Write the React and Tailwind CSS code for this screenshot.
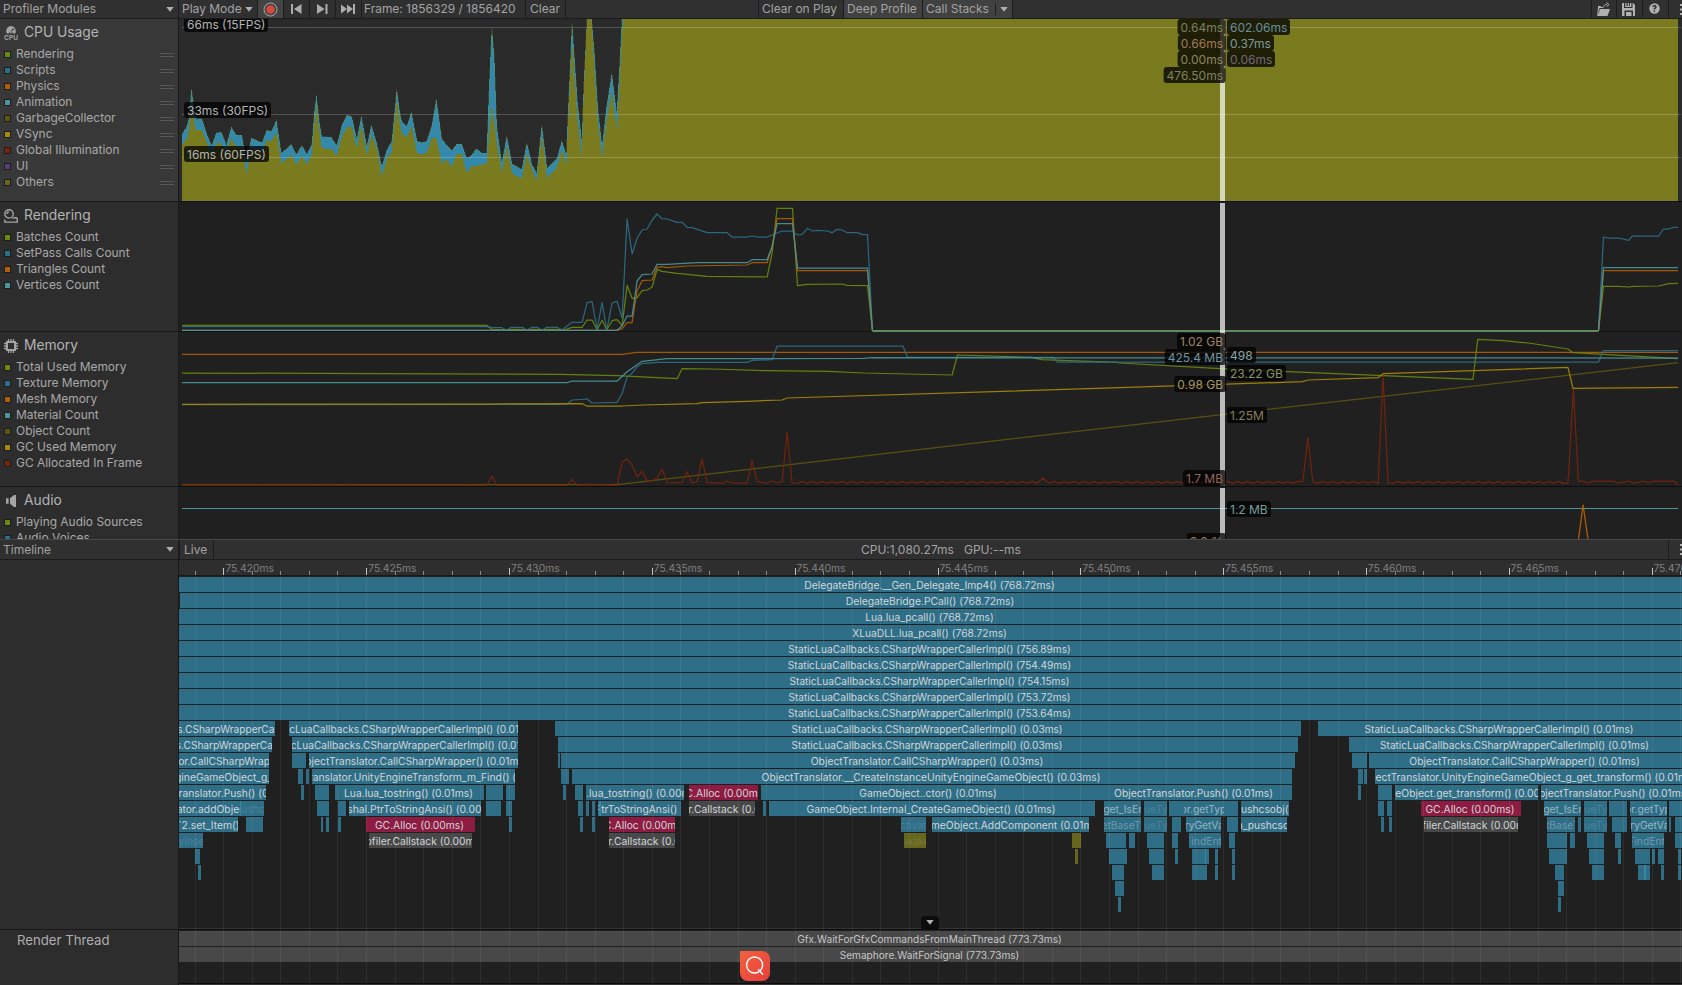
import React from "react";

const C = {
  green: "#6b8a0c",
  blue: "#2c6f8a",
  orange: "#b15e05",
  cyan: "#4a969c",
  darkOlive: "#5d560f",
  yellow: "#a88a08",
  red: "#78240d",
  purple: "#54407a",
  olive: "#68681c",
};

/* ---------- chart geometry ---------- */
// Samples are stored in plot units; each block of samples has its own left edge.
const block = (left, scale, pts) => pts.map(([x, y]) => [left + x / scale, y / 3]);
const A = (pts) => block(0, 2.8, pts);
const B = (pts) => block(560, 2.8, pts);
const D = (pts) => block(1120, 2.79, pts);
const join = (pts) => pts.map(([x, y]) => x.toFixed(1) + "," + y.toFixed(1)).join(" ");

const cpuA = [
  [510, 403, 435], [524, 378, 415], [530, 350, 385], [536, 268, 318], [548, 356, 390], [565, 356, 390], [580, 405, 430],
  [593, 438, 470], [606, 398, 430], [620, 397, 430], [634, 435, 460], [648, 382, 415], [662, 405, 440],
  [677, 405, 440], [690, 485, 520], [704, 414, 445], [730, 427, 455], [735, 425, 455], [747, 390, 421], [760, 395, 423],
  [774, 361, 397], [788, 460, 490], [816, 433, 465], [830, 464, 493], [845, 436, 468], [859, 463, 492],
  [873, 434, 463], [880, 340, 380], [886, 286, 316], [895, 370, 400], [901, 410, 445], [928, 412, 447], [943, 437, 466],
  [958, 375, 408], [972, 345, 381], [985, 350, 381], [999, 418, 445], [1012, 349, 378], [1027, 440, 466],
  [1040, 376, 405], [1055, 430, 445], [1069, 500, 530], [1083, 450, 475], [1097, 424, 455], [1111, 268, 298],
  [1120, 340, 375], [1125, 365, 400], [1139, 380, 412], [1152, 337, 378], [1168, 424, 460], [1181, 428, 463], [1195, 424, 458],
  [1209, 378, 414], [1222, 298, 414], [1237, 418, 490], [1251, 435, 478], [1265, 452, 500], [1278, 433, 463],
  [1293, 433, 463], [1307, 475, 520], [1321, 465, 497], [1334, 446, 497], [1349, 460, 495], [1363, 460, 490], [1370, 250, 400], [1377, 85, 316],
  [1384, 170, 370], [1391, 380, 432], [1405, 490, 517], [1419, 408, 438], [1434, 492, 520], [1461, 508, 535], [1475, 430, 460],
  [1490, 495, 510], [1503, 520, 543], [1517, 375, 405], [1532, 505, 535], [1560, 475, 500],
];
const cpuB = [
  [5, 423, 450], [18, 466, 493], [22, 350, 390], [34, 70, 125], [49, 305, 360], [61, 424, 468], [67, 250, 280],
  [76, 50, 50], [88, 50, 60], [97, 165, 220], [106, 325, 370], [118, 438, 472], [130, 325, 365],
  [145, 220, 275], [159, 340, 390], [167, 195, 255], [174, 50, 100], [178, 50, 50],
];
const cpuTop = [...A(cpuA), ...B(cpuB)];
const cpuBase = [...A(cpuA.map(([x, , y]) => [x, y])), ...B(cpuB.map(([x, , y]) => [x, y]))];
const area = (pts) => join([[182, 201], ...pts, [1678, 16], [1678, 201]]);

const rendering = {
  green: [
    ...A([[510, 376], [1363, 376], [1377, 388], [1405, 389], [1419, 391], [1432, 388], [1463, 388], [1475, 391], [1490, 388], [1505, 388], [1517, 391], [1531, 388], [1560, 388]]),
    ...B([[10, 390], [34, 382], [62, 382], [76, 360], [90, 360], [104, 390], [118, 361], [131, 390], [146, 362], [160, 359], [174, 377], [188, 256], [202, 295], [216, 293], [230, 272], [244, 270], [258, 261], [272, 208], [286, 214], [328, 220], [412, 229], [580, 231], [594, 160], [608, 25], [651, 25], [665, 257], [693, 253], [790, 252], [804, 256], [861, 257], [875, 392]]),
    ...D([[1335, 392], [1349, 259], [1391, 259], [1419, 261], [1430, 259], [1503, 258], [1530, 251], [1557, 250]]),
  ],
  blue: [
    ...A([[510, 380], [1363, 380], [1377, 383], [1405, 383], [1419, 391], [1432, 382], [1463, 382], [1475, 391], [1490, 382], [1505, 382], [1517, 391], [1531, 382], [1560, 382]]),
    ...B([[5, 390], [34, 367], [62, 367], [76, 308], [90, 305], [104, 388], [118, 308], [131, 390], [146, 309], [160, 304], [174, 355], [188, 57], [202, 162], [216, 115], [230, 90], [244, 87], [258, 60], [272, 42], [286, 56], [300, 57], [328, 67], [342, 67], [356, 82], [370, 83], [412, 98], [468, 98], [482, 111], [524, 111], [538, 108], [552, 111], [580, 111], [608, 99], [622, 93], [650, 93], [665, 105], [678, 103], [693, 85], [707, 93], [720, 91], [748, 93], [762, 98], [776, 88], [790, 90], [804, 98], [832, 98], [846, 103], [861, 104], [875, 392]]),
    ...D([[1335, 392], [1349, 111], [1363, 114], [1391, 114], [1419, 121], [1430, 108], [1503, 108], [1516, 87], [1530, 87], [1544, 82], [1557, 82]]),
  ],
  orange: [
    ...A([[510, 391]]),
    ...B([[160, 391], [174, 386], [188, 368], [202, 368], [216, 272], [230, 242], [258, 240], [272, 202], [286, 200], [300, 203], [356, 198], [524, 195], [538, 188], [580, 188], [594, 140], [608, 56], [651, 56], [665, 212], [861, 212], [875, 392]]),
    ...D([[1335, 392], [1349, 212], [1557, 212]]),
  ],
  cyan: [
    ...A([[510, 391]]),
    ...B([[160, 391], [174, 377], [188, 348], [202, 348], [216, 243], [230, 224], [258, 222], [272, 193], [300, 193], [384, 188], [524, 188], [538, 179], [580, 179], [594, 140], [608, 71], [651, 71], [665, 204], [861, 204], [875, 392]]),
    ...D([[1335, 392], [1349, 203], [1557, 203]]),
  ],
};

const ripple = (from, to) => {
  const pts = [];
  for (let x = from, i = 0; x <= to; x += 14, i++) pts.push([x, i % 2 ? 844 : 850]);
  return pts;
};
const memory = {
  orange: [...A([[510, 463]]), ...B([[174, 463], [216, 457]]), ...D([[1557, 457]])],
  green: [
    ...A([[510, 519], [1568, 523]]),
    ...B([[160, 527], [328, 536], [342, 506], [426, 507], [580, 512], [750, 514], [850, 519], [1098, 525], [1113, 465], [1320, 472], [1350, 479], [1560, 487]]),
    ...D([[0, 489], [280, 506], [985, 538], [998, 418], [1070, 422], [1140, 429], [1250, 447], [1264, 458], [1557, 476]]),
  ],
  blue: [
    ...A([[510, 614], [1560, 613]]),
    ...B([[20, 612], [34, 600], [76, 597], [90, 609], [160, 607], [174, 580], [188, 532], [202, 520], [216, 500], [230, 491], [272, 487], [524, 487], [538, 481], [594, 479], [608, 438], [960, 438], [973, 472], [1380, 472], [1393, 486], [1568, 486]]),
    ...D([[1335, 486], [1349, 452], [1557, 452]]),
  ],
  cyan: [
    ...A([[510, 548]]),
    ...B([[20, 548], [34, 543], [160, 543], [188, 515], [230, 484], [300, 476], [850, 475], [875, 473]]),
    ...D([[1557, 474]]),
  ],
  darkOlive: [...A([[510, 854]]), ...B([[160, 854], [1568, 679]]), ...D([[1557, 488]])],
  yellow: [
    ...A([[510, 613], [1363, 612]]),
    ...B([[62, 611], [76, 618], [174, 618], [230, 615], [384, 611], [398, 608], [524, 604], [622, 600], [636, 594], [1568, 563]]),
    ...D([[510, 545], [524, 540], [720, 533], [734, 521], [1250, 502], [1264, 565], [1557, 562]]),
  ],
  red: [
    ...A([[510, 855], [1363, 856], [1377, 828], [1391, 856]]),
    ...B([[20, 856], [34, 838], [48, 856], [76, 853], [160, 856], [174, 785], [188, 777], [202, 795], [216, 831], [230, 814], [244, 842], [258, 842], [272, 833], [286, 808], [300, 849], [342, 847], [356, 816], [370, 849], [384, 845], [398, 777], [412, 847], [455, 850], [468, 843], [482, 849], [524, 849], [538, 783], [552, 845], [580, 850], [594, 842], [608, 849], [622, 845], [636, 697], [650, 849]]),
    ...B(ripple(664, 1336)),
    ...B([[1352, 835]]),
    ...B(ripple(1370, 1560)),
    ...D(ripple(6, 500)),
    ...D([[510, 845], [524, 713], [538, 845]]),
    ...D(ripple(552, 710)),
    ...D([[720, 850], [734, 527], [748, 849]]),
    ...D(ripple(762, 1244)),
    ...D([[1250, 850], [1265, 568], [1279, 843], [1293, 843], [1306, 850], [1320, 843], [1376, 843], [1390, 850], [1418, 843], [1432, 850], [1460, 843], [1474, 850], [1488, 843], [1545, 843], [1557, 856]]),
  ],
};

/* ---------- timeline ---------- */
const SL = "StaticLuaCallbacks.CSharpWrapperCallerImpl()";
const OT = "ObjectTranslator.";
const GC = "GC.Alloc (0.00ms)";
const CS = "Profiler.Callstack (0.00ms)";
const IsEnum = "Type.get_IsEnum()";
const IsValue = "IsValueType()";
const TryGet = "Dictionary.TryGetValue() (0.00)";
// [left, right, label, kind, label tone]
const rows = [
  [[179, 1682, "DelegateBridge.__Gen_Delegate_Imp4() (768.72ms)"]],
  [[180, 1682, "DelegateBridge.PCall() (768.72ms)"]],
  [[179, 1682, "Lua.lua_pcall() (768.72ms)"]],
  [[179, 1682, "XLuaDLL.lua_pcall() (768.72ms)"]],
  [[179, 1682, SL + " (756.89ms)"]],
  [[179, 1682, SL + " (754.49ms)"]],
  [[179, 1682, SL + " (754.15ms)"]],
  [[179, 1682, SL + " (753.72ms)"]],
  [[179, 1682, SL + " (753.64ms)"]],
  [[179, 275, SL + " (0.01ms)"], [289, 518, SL + " (0.01ms)"], [555, 1301, SL + " (0.03ms)"], [1318, 1682, SL + " (0.01ms)"]],
  [[179, 272, SL + " (0.01ms)"], [292, 518, SL + " (0.01ms)"], [558, 1298, SL + " (0.03ms)"], [1349, 1682, SL + " (0.01ms)"]],
  [[179, 269, OT + "CallCSharpWrapper() (0.01ms)"], [292, 306], [309, 518, OT + "CallCSharpWrapper() (0.01ms)"], [558, 560], [561, 1295, OT + "CallCSharpWrapper() (0.03ms)"], [1352, 1367], [1369, 1682, OT + "CallCSharpWrapper() (0.01ms)"]],
  [[179, 269, OT + "UnityEngineGameObject_g_get_transform() (0.01ms)"], [298, 303], [306, 309], [312, 515, OT + "UnityEngineTransform_m_Find() (0.01ms)"], [561, 569], [572, 1292, OT + "__CreateInstanceUnityEngineGameObject() (0.03ms)"], [1358, 1363], [1364, 1367], [1375, 1682, OT + "UnityEngineGameObject_g_get_transform() (0.01ms)"]],
  [[179, 266, OT + "Push() (0.00ms)"], [301, 304], [315, 329], [335, 484, "Lua.lua_tostring() (0.01ms)"], [486, 503], [506, 515], [563, 566], [575, 583], [586, 684, "Lua.lua_tostring() (0.00ms)"], [689, 758, GC, "gc"], [761, 1097, "GameObject..ctor() (0.01ms)"], [1097, 1292, OT + "Push() (0.01ms)"], [1358, 1361], [1378, 1392], [1395, 1538, "GameObject.get_transform() (0.00ms)"], [1541, 1682, OT + "Push() (0.01ms)"]],
  [[179, 241, OT + "addObject() (0.00ms)"], [241, 264, "xlua_pushcsobj()", "", "faint"], [317, 329], [338, 346], [349, 481, "Marshal.PtrToStringAnsi() (0.00ms)"], [486, 501], [506, 512], [578, 583], [586, 589], [592, 595], [598, 681, "Marshal.PtrToStringAnsi() (0.00ms)"], [689, 755, CS, "gray"], [763, 766], [769, 1095, "GameObject.Internal_CreateGameObject() (0.01ms)"], [1104, 1141, IsEnum, "", "soft"], [1144, 1167, IsValue, "", "faint"], [1169, 1184], [1184, 1224, OT + "getTypeId() (0.00ms)", "", "soft"], [1224, 1238], [1241, 1289, "Lua.xlua_pushcsobj() (0.00ms)"], [1378, 1384], [1387, 1392], [1421, 1521, GC, "gc"], [1544, 1581, IsEnum, "", "soft"], [1584, 1607, IsValue, "", "faint"], [1609, 1627], [1630, 1667, OT + "getTypeId() (0.00ms)", "", "soft"], [1669, 1682]],
  [[179, 238, "Dictionary`2.set_Item() (0.00ms)"], [246, 263], [321, 323], [326, 329], [338, 341], [366, 475, GC, "gc"], [509, 512], [580, 583], [592, 595], [609, 675, GC, "gc"], [901, 926, "Activate", "", "faint"], [932, 1089, "GameObject.AddComponent (0.01ms)"], [1104, 1141, "Type.GetBaseType() ()", "", "dim"], [1144, 1167, IsValue, "", "faint"], [1172, 1181], [1186, 1221, TryGet, "", "soft"], [1227, 1238], [1241, 1287, "Lua.xlua_pushcsobj (0.0)"], [1381, 1384], [1389, 1392], [1424, 1518, CS, "gray"], [1547, 1575, "Type.GetBaseType() ()", "", "dim"], [1578, 1581], [1584, 1607, IsValue, "", "faint"], [1612, 1627], [1631, 1667, TryGet, "", "soft"], [1669, 1671], [1675, 1682]],
  [[179, 203, "TryInsert", "", "faint"], [369, 472, CS, "gray"], [609, 675, CS, "gray"], [904, 926, "Awake", "olive", "faint"], [1072, 1081, "", "olive"], [1106, 1126], [1129, 1135], [1147, 1164], [1172, 1178], [1189, 1221, "e.FindEntry", "", "dim"], [1229, 1235], [1547, 1567], [1570, 1575], [1587, 1604], [1615, 1621], [1632, 1664, "e.FindEntry", "", "dim"], [1675, 1682]],
  [[195, 200], [1075, 1078, "", "olive"], [1109, 1127], [1149, 1164], [1175, 1178], [1192, 1209], [1215, 1218], [1232, 1235], [1549, 1567], [1589, 1604], [1618, 1621], [1635, 1650], [1652, 1655], [1658, 1664], [1678, 1681]],
  [[198, 201], [1112, 1124], [1152, 1164], [1192, 1207], [1215, 1218], [1232, 1235], [1555, 1564], [1592, 1604], [1638, 1650], [1661, 1664], [1678, 1681]],
  [[1115, 1124], [1558, 1564]],
  [[1118, 1121], [1558, 1561]],
];
const kinds = { gc: "bg-[#8e1b42]", gray: "bg-[#484848]", olive: "bg-[#66661d]" };
const tones = { faint: "text-white/15", dim: "text-white/30", soft: "text-white/50" };

const ticks = Array.from({ length: 53 }, (_, i) => ({ x: Math.floor(195.1 + i * 28.575 - 179), major: i % 5 === 1 }));
const tickLabels = ["75.420ms", "75.425ms", "75.430ms", "75.435ms", "75.440ms", "75.445ms", "75.450ms", "75.455ms", "75.460ms", "75.465ms", "75.470ms"];

/* ---------- small pieces ---------- */
const Caret = ({ className = "" }) => (
  <svg className={"shrink-0 " + className} width="8" height="5" viewBox="0 0 8 5"><path d="M.3 0h7.4L4 4.8z" fill="#b0b0b0" /></svg>
);

const Cell = ({ className = "", children }) => (
  <div className={"flex h-full shrink-0 items-center border-r border-[#1c1c1c] " + className}>{children}</div>
);

const icons = {
  cpu: (
    <svg width="14" height="14" viewBox="0 0 14 14">
      <path d="M2.9 7.6A5 5 0 0 1 7 .1a5 5 0 0 1 4.1 7.5z" fill="#a4a4a4" />
      <path d="m10 2.4-3 3.2" stroke="#383838" strokeWidth="1.1" />
      <path d="M4.9 7.8a2.1 2.1 0 0 1 4.2 0z" fill="#383838" />
      <circle cx="7" cy="6.2" r=".9" fill="#a4a4a4" />
      <text x="0" y="14" fill="#a4a4a4" fontSize="6.6" fontWeight="700" fontFamily="Inter" textLength="14" lengthAdjust="spacingAndGlyphs">CPU</text>
    </svg>
  ),
  rendering: (
    <svg width="14" height="14" viewBox="0 0 14 14" fill="none" stroke="#a4a4a4">
      <circle cx="5" cy="4.9" r="4.2" strokeWidth="1.4" />
      <path d="M3.6 5.4a1.9 1.9 0 0 1 1.9-1.9" strokeWidth="1.4" transform="translate(-.6 -.5)" />
      <path d="M10 8.7h2.6l.7 1.5v2.9H.8v-2.6" strokeWidth="1.4" />
      <path d="M8.2 9.6 10 8.7" strokeWidth="1.2" />
    </svg>
  ),
  memory: (
    <svg width="14" height="14" viewBox="0 0 14 14" fill="none" stroke="#a4a4a4">
      <rect x="3" y="3" width="8" height="8" strokeWidth="2" />
      <path d="M4.5 0v2M7 0v2M9.5 0v2M4.5 12v2M7 12v2M9.5 12v2M0 4.5h2M0 7h2M0 9.5h2M12 4.5h2M12 7h2M12 9.5h2" strokeWidth="1.3" />
    </svg>
  ),
  audio: (
    <svg width="14" height="14" viewBox="0 0 14 14" fill="#a4a4a4"><path d="M2 4.2h2.6v5.6H2zM6 4.2 10 1h2v12h-2L6 9.8z" /></svg>
  ),
};

const Panel = ({ title, icon, items, height, selected, handles }) => (
  <div className={"shrink-0 overflow-hidden border-b border-[#191919] " + height + (selected ? " bg-[#383838]" : " bg-[#2d2d2d]")}>
    <div className="flex h-[27px] items-center gap-[6px] pl-1">
      {icon}
      <span className="text-[13.8px] leading-none text-[#b4b4b4]">{title}</span>
    </div>
    {items.map(([label, color]) => (
      <div key={label} className="flex h-4 items-center pr-1 pl-1">
        <span className="size-[7px] shrink-0 border border-[#1d1d1d]" style={{ background: color }} />
        <span className="ml-[5px] flex-1 text-[11.95px] leading-4 whitespace-nowrap text-[#a8a8a8]">{label}</span>
        {handles && <span className="mt-px h-1 w-[14px] border-y border-[#585858]" />}
      </div>
    ))}
  </div>
);

// A value box that lies over a chart; x is its left edge, or its right edge when `end` is set.
const Chip = ({ x, y, end, color = "#b4b4b4", children }) => (
  <span
    className="absolute h-4 rounded-[3px] bg-black/75 px-[3px] text-[12px] leading-[17px] whitespace-nowrap"
    style={{ left: x - 179, top: y, color, transform: end ? "translateX(-100%)" : undefined }}
  >
    {children}
  </span>
);

const Marker = ({ top = "top-0" }) => <span className={"absolute bottom-0 left-[1041px] w-[5px] bg-white/70 " + top} />;

const Lines = ({ series, dy, height, children }) => (
  <svg className="block" width="1502" height={height} fill="none">
    <g transform={"translate(-179 " + dy + ")"} strokeWidth="1.25" strokeLinejoin="round">
      {Object.entries(series).map(([name, pts]) => (
        <polyline key={name} points={join(pts)} stroke={C[name]} strokeOpacity=".9" />
      ))}
      {children}
    </g>
  </svg>
);

function Toolbar() {
  return (
    <div className="flex h-[19px] shrink-0 overflow-hidden border-b border-[#1c1c1c] bg-[#303030] text-[12px] leading-none text-[#a3a3a3]">
      <Cell className="w-[179px] justify-between pr-1 pl-[3px]"><span>Profiler Modules</span><Caret /></Cell>
      <Cell className="w-[79px] justify-between pr-1 pl-[3px]"><span>Play Mode</span><Caret /></Cell>
      <Cell className="w-[26px] justify-center bg-[#444]">
        <svg width="15" height="15" viewBox="0 0 15 15"><circle cx="7.5" cy="7.5" r="6.5" fill="none" stroke="#a8a8a8" /><circle cx="7.5" cy="7.5" r="4.3" fill="#d8493d" /></svg>
      </Cell>
      <Cell className="w-[26px] justify-center"><svg width="11" height="10" fill="#acacac"><path d="M0 0h2v10H0zM10.5 0v10L3 5z" /></svg></Cell>
      <Cell className="w-[26px] justify-center"><svg width="11" height="10" fill="#acacac"><path d="M8.5 0h2v10h-2zM0 0v10L7.5 5z" /></svg></Cell>
      <Cell className="w-[26px] justify-center pr-px"><svg width="14" height="10" fill="#acacac"><path d="M12 0h2v10h-2zM0 .5v9L6 5zM6 .5v9L12 5z" /></svg></Cell>
      <Cell className="w-[164px] pl-[2px]"><span className="text-[11.95px]">Frame: 1856329 / 1856420</span></Cell>
      <Cell className="w-10 pl-1"><span>Clear</span></Cell>
      <Cell className="flex-1"><span /></Cell>
      <Cell className="w-[85px] pl-[3px]"><span>Clear on Play</span></Cell>
      <Cell className="w-[79px] bg-[#414141] pl-[3px]"><span>Deep Profile</span></Cell>
      <Cell className="w-[90px] bg-[#414141] pl-[3px]">
        <span>Call Stacks</span><span className="ml-[6px] h-3 border-l border-[#202020]" /><Caret className="ml-1" />
      </Cell>
      <Cell className="w-[579px]"><span /></Cell>
      <Cell className="w-[25px] justify-center pr-px">
        <svg width="15" height="15" viewBox="0 0 15 15" fill="#b0b0b0">
          <path d="M1 4h3.5l1 1H7v1H3.5L2 11V6L1 14zM1 4v10h1V4zM4 7h10l-2.5 7H1.5z" />
          <path d="M7.5 5.5c0-2 1-3 3.5-3M10.5.6 13 2.6l-2.5 2" fill="none" stroke="#b0b0b0" />
        </svg>
      </Cell>
      <Cell className="w-[26px] justify-center pr-[2px]">
        <svg width="13" height="13" viewBox="0 0 13 13" fill="#b0b0b0"><path d="M0 0h2v5h8.5V0H11l2 2v11h-2V7.5H2.5V13H0zM3.2 0h1.3v3h1.2V0h1.2v3h1V0h1.5v4h-6.2zM4 9h5.5v4H4z" /></svg>
      </Cell>
      <Cell className="w-[26px] justify-center pr-[2px] pb-px">
        <svg width="11" height="11" viewBox="0 0 11 11"><circle cx="5.5" cy="5.5" r="5.2" fill="#b0b0b0" /><text x="5.5" y="8.7" textAnchor="middle" fontSize="8.5" fontWeight="800" fontFamily="Inter" fill="#303030">?</text></svg>
      </Cell>
      <div className="flex w-[13px] items-center justify-end"><svg width="2" height="11" fill="#b0b0b0"><path d="M0 0h2v2H0zM0 4.5h2v2H0zM0 9h2v2H0z" /></svg></div>
    </div>
  );
}

export default function App() {
  return (
    <div className="flex h-[985px] w-[1682px] flex-col overflow-hidden bg-[#202020] font-['Inter',sans-serif]">
      <Toolbar />

      {/* module list and charts */}
      <div className="flex h-[520px] shrink-0 overflow-hidden">
        <div className="flex h-full w-[179px] shrink-0 flex-col overflow-hidden border-r border-[#191919]">
          <Panel title="CPU Usage" icon={icons.cpu} height="h-[183px]" selected handles items={[["Rendering", C.green], ["Scripts", C.blue], ["Physics", C.orange], ["Animation", C.cyan], ["GarbageCollector", C.darkOlive], ["VSync", C.yellow], ["Global Illumination", C.red], ["UI", C.purple], ["Others", C.olive]]} />
          <Panel title="Rendering" icon={icons.rendering} height="h-[130px]" items={[["Batches Count", C.green], ["SetPass Calls Count", C.blue], ["Triangles Count", C.orange], ["Vertices Count", C.cyan]]} />
          <Panel title="Memory" icon={icons.memory} height="h-[155px]" items={[["Total Used Memory", C.green], ["Texture Memory", C.blue], ["Mesh Memory", C.orange], ["Material Count", C.cyan], ["Object Count", C.darkOlive], ["GC Used Memory", C.yellow], ["GC Allocated In Frame", C.red]]} />
          <Panel title="Audio" icon={icons.audio} height="h-[120px]" items={[["Playing Audio Sources", C.green], ["Audio Voices", C.blue]]} />
        </div>

        <div className="flex flex-1 flex-col">
          <div className="relative h-[183px] shrink-0 overflow-hidden border-b border-[#111] bg-[#2a2a2a]">
            <svg className="block" width="1503" height="182" shapeRendering="crispEdges">
              <g transform="translate(-179 -19)">
                <polygon points={area(cpuTop)} fill="#3488a9" />
                <polyline points={join(cpuTop)} fill="none" stroke="#7f9a17" strokeWidth="1" strokeOpacity=".25" />
                <polygon points={area(cpuBase)} fill="#7a7a1f" />
                <path d="M182 27.5h1499M182 114.5h1499M182 157.5h1499" stroke="#fff" strokeOpacity=".2" />
              </g>
            </svg>
            <Marker />
            <Chip x={184} y={-3}>66ms (15FPS)</Chip>
            <Chip x={184} y={83}>33ms (30FPS)</Chip>
            <Chip x={184} y={127}>16ms (60FPS)</Chip>
            <Chip end x={1226} y={0} color="#7a8256">0.64ms</Chip>
            <Chip end x={1226} y={16} color="#a37a58">0.66ms</Chip>
            <Chip end x={1226} y={32} color="#8d865c">0.00ms</Chip>
            <Chip end x={1226} y={48} color="#80815c">476.50ms</Chip>
            <Chip x={1227} y={0} color="#698d9b">602.06ms</Chip>
            <Chip x={1227} y={16} color="#7b9c9a">0.37ms</Chip>
            <Chip x={1227} y={32} color="#6f6a73">0.06ms</Chip>
          </div>

          <div className="relative h-[130px] shrink-0 overflow-hidden">
            <Lines series={rendering} dy={-2} height="130">
              <path d="M179 131.5h1503" stroke="#111" strokeWidth="1" />
              <path d="M872.5 131h726" stroke="#628a62" strokeWidth="2" />
            </Lines>
            <Marker top="top-px" />
          </div>

          <div className="relative h-[155px] shrink-0 overflow-hidden border-b border-[#0e0e0e]">
            <Lines series={memory} dy={-132} height="154" />
            <Marker />
            <Chip end x={1226} y={1} color="#a58363">1.02 GB</Chip>
            <Chip end x={1226} y={17} color="#7093a3">425.4 MB</Chip>
            <Chip end x={1226} y={44} color="#a89a63">0.98 GB</Chip>
            <Chip end x={1226} y={138} color="#93655a">1.7 MB</Chip>
            <Chip x={1227} y={15} color="#88a4a5">498</Chip>
            <Chip x={1227} y={33} color="#8b9464">23.22 GB</Chip>
            <Chip x={1227} y={75} color="#85815f">1.25M</Chip>
          </div>

          <div className="relative flex-1 overflow-hidden">
            <Lines series={{}} dy={-287} height="52">
              <path d="M182 308.5h1496" stroke={C.cyan} strokeWidth="1" />
              <polyline points={join(D([[1279, 1020], [1292, 915], [1306, 1020]]))} stroke={C.orange} />
            </Lines>
            <Marker top="top-px" />
            <Chip x={1227} y={14} color="#7c9b9b">1.2 MB</Chip>
            <Chip end x={1226} y={46} color="#a58363">0.0 %</Chip>
          </div>
        </div>
      </div>

      {/* timeline toolbar */}
      <div className="flex h-[21px] shrink-0 border-t border-b border-t-[#484848] border-b-[#1c1c1c] bg-[#303030] text-[12px] leading-none text-[#a3a3a3]">
        <Cell className="w-[179px] justify-between pr-1 pl-[3px]"><span>Timeline</span><Caret /></Cell>
        <Cell className="w-[35px] border-l pl-1"><span>Live</span></Cell>
        <Cell className="w-[1455px] pl-[647px]"><span>CPU:1,080.27ms</span><span className="ml-[10px]">GPU:--ms</span></Cell>
        <div className="flex flex-1 items-center justify-end"><svg width="2" height="11" fill="#b0b0b0"><path d="M0 0h2v2H0zM0 4.5h2v2H0zM0 9h2v2H0z" /></svg></div>
      </div>

      {/* timeline */}
      <div className="flex flex-1 overflow-hidden">
        <div className="flex w-[179px] shrink-0 flex-col border-r border-[#191919] bg-[#2d2d2d]">
          <div className="h-[369px] shrink-0" />
          <div className="flex-1 border-t border-[#191919] pt-px pl-[17px] text-[13.2px] text-[#adadad]">Render Thread</div>
        </div>

        <div className="relative flex flex-1 flex-col overflow-hidden">
          <div className="relative h-4 shrink-0 overflow-hidden border-b border-[#191919] bg-[#2e2e2e]">
            <svg className="block" width="1503" height="15" shapeRendering="crispEdges">
              {ticks.map((t) => (
                <path key={t.x} d={"M" + (t.x + 0.5) + (t.major ? " 8v7" : " 11v4")} stroke={t.major ? "#c4c4c4" : "#8a8a8a"} />
              ))}
            </svg>
            {tickLabels.map((l, i) => (
              <span key={l} className="absolute top-0 text-[10.3px] leading-[17px] whitespace-nowrap text-[#808080]" style={{ left: 46.4 + i * 142.8 }}>{l}</span>
            ))}
          </div>

          <div className="relative h-[353px] shrink-0 overflow-hidden border-b border-[#343434]">
            {rows.map((row, r) =>
              row.map(([a, b, label = "", kind, tone], i) => (
                <div
                  key={r + "-" + i}
                  className={"absolute flex h-[15px] justify-center overflow-hidden leading-[17px] whitespace-nowrap " + (label.startsWith(SL) ? "text-[10.12px] " : "text-[10.3px] ") + (kinds[kind] || "bg-[#2f6e87]") + " " + (tones[tone] || "text-[#cfd6d9]")}
                  style={{ left: a - 179, width: b - a, top: 1 + r * 16 }}
                >
                  {label && <span className="mr-[2px] shrink-0">{label}</span>}
                </div>
              ))
            )}
            <span className="absolute top-[225px] left-[61px] h-[15px] w-px bg-[#3686a6]" />
            <span className="absolute top-[225px] left-[420px] h-[15px] w-[2px] bg-[#3686a6]" />
            <span className="absolute top-[273px] left-[1026px] h-[15px] w-px bg-[#3686a6]" />
            <span className="absolute top-[289px] left-[1465px] h-[15px] w-[2px] bg-[#3686a6]" />
          </div>

          <div className="flex flex-1 flex-col gap-px border-t border-b border-[#0c0c0c] pt-px text-center text-[10.12px] leading-[16px] text-[#c6c6c6]">
            <div className="h-[15px] shrink-0 bg-[#484848] pr-[2px]">Gfx.WaitForGfxCommandsFromMainThread (773.73ms)</div>
            <div className="h-[15px] shrink-0 bg-[#484848] pr-[2px]">Semaphore.WaitForSignal (773.73ms)</div>
          </div>
          <div className="h-px shrink-0 bg-[#343434]" />

          <svg className="pointer-events-none absolute top-4 left-0" width="1503" height="407" shapeRendering="crispEdges">
            {ticks.map((t) => (
              <path key={t.x} d={"M" + (t.x + 0.5) + " 0v407"} stroke="#fff" strokeOpacity=".06" />
            ))}
          </svg>

          <span className="absolute top-[356px] left-[742px] flex h-[13px] w-[18px] items-center justify-center rounded-t-sm bg-[#0c0c0c]"><Caret /></span>

          <div className="absolute top-[391px] left-[561px] flex h-[30px] w-[30px] items-center justify-center rounded-[8px] rounded-tl-[1px] bg-linear-to-br from-[#f4603f] to-[#e63e3b]">
            <svg width="20" height="22" viewBox="0 0 20 22" fill="none" stroke="#fff" strokeWidth="1.4" strokeLinecap="round"><circle cx="9.6" cy="10" r="8" /><path d="m13.6 14.6 4 4.6" /></svg>
          </div>
        </div>
      </div>
    </div>
  );
}
